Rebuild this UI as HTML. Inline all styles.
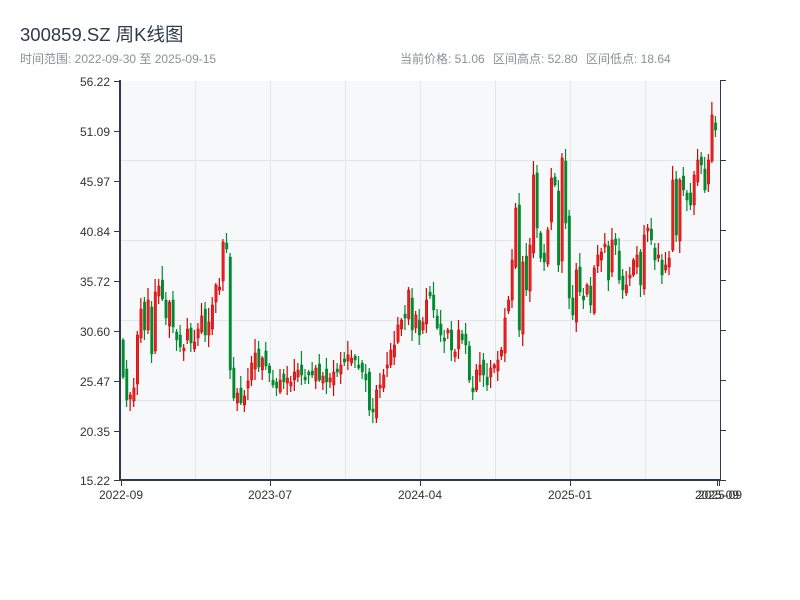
<!DOCTYPE html>
<html><head><meta charset="utf-8"><style>
body{margin:0;width:800px;height:600px;background:#fff;font-family:"Liberation Sans","Noto Sans CJK SC",sans-serif;overflow:hidden}
</style></head><body>
<svg id="s" width="800" height="600" xmlns="http://www.w3.org/2000/svg" style="position:absolute;left:0;top:0">
<text x="20" y="41" font-size="18.5" fill="#2d3a4b" font-family="Liberation Sans,Noto Sans CJK SC,sans-serif">300859.SZ 周K线图</text>
<text x="20" y="63" font-size="12" fill="#8a8f96" font-family="Liberation Sans,Noto Sans CJK SC,sans-serif">时间范围: 2022-09-30 至 2025-09-15</text>
<text x="400" y="63" font-size="12" fill="#8a8f96" font-family="Liberation Sans,Noto Sans CJK SC,sans-serif">当前价格: 51.06</text>
<text x="493" y="63" font-size="12" fill="#8a8f96" font-family="Liberation Sans,Noto Sans CJK SC,sans-serif">区间高点: 52.80</text>
<text x="586" y="63" font-size="12" fill="#8a8f96" font-family="Liberation Sans,Noto Sans CJK SC,sans-serif">区间低点: 18.64</text>
<rect x="121" y="81" width="599" height="399" fill="#f6f8fa"/>
<g stroke="#e2e5ea" stroke-width="1">
<line x1="195.5" y1="81" x2="195.5" y2="480"/><line x1="270.5" y1="81" x2="270.5" y2="480"/><line x1="345.5" y1="81" x2="345.5" y2="480"/><line x1="420.5" y1="81" x2="420.5" y2="480"/><line x1="495.5" y1="81" x2="495.5" y2="480"/><line x1="570.5" y1="81" x2="570.5" y2="480"/><line x1="645.5" y1="81" x2="645.5" y2="480"/>
<line x1="121" y1="160.5" x2="720" y2="160.5"/><line x1="121" y1="240.5" x2="720" y2="240.5"/><line x1="121" y1="320.5" x2="720" y2="320.5"/><line x1="121" y1="400.5" x2="720" y2="400.5"/>
</g>
<g id="c"></g>
<g stroke="#2d3a4b">
<line x1="120" y1="80" x2="120" y2="481" stroke-width="2"/>
<line x1="119" y1="480" x2="721" y2="480" stroke-width="2"/>
<line x1="720.5" y1="80" x2="720.5" y2="481" stroke-width="1"/>
<line x1="114" y1="81.5" x2="120" y2="81.5"/><line x1="114" y1="131.5" x2="120" y2="131.5"/><line x1="114" y1="181.5" x2="120" y2="181.5"/><line x1="114" y1="231.5" x2="120" y2="231.5"/><line x1="114" y1="281.5" x2="120" y2="281.5"/><line x1="114" y1="331.5" x2="120" y2="331.5"/><line x1="114" y1="381.5" x2="120" y2="381.5"/><line x1="114" y1="431.5" x2="120" y2="431.5"/><line x1="114" y1="480.5" x2="120" y2="480.5"/>
<line x1="720" y1="80.5" x2="726" y2="80.5"/><line x1="720" y1="160.5" x2="726" y2="160.5"/><line x1="720" y1="230.5" x2="726" y2="230.5"/><line x1="720" y1="280.5" x2="726" y2="280.5"/><line x1="720" y1="330.5" x2="726" y2="330.5"/><line x1="720" y1="380.5" x2="726" y2="380.5"/><line x1="720" y1="430.5" x2="726" y2="430.5"/><line x1="720" y1="480.5" x2="726" y2="480.5"/>
<line x1="121.5" y1="480" x2="121.5" y2="486"/><line x1="270.5" y1="480" x2="270.5" y2="486"/><line x1="420.5" y1="480" x2="420.5" y2="486"/><line x1="570.5" y1="480" x2="570.5" y2="486"/><line x1="717.5" y1="480" x2="717.5" y2="486"/><line x1="719.5" y1="480" x2="719.5" y2="486"/>
</g>
<g font-size="12" fill="#333" text-anchor="end" font-family="Liberation Sans,sans-serif">
<text x="110" y="86">56.22</text><text x="110" y="136">51.09</text><text x="110" y="186">45.97</text><text x="110" y="236">40.84</text><text x="110" y="286">35.72</text><text x="110" y="336">30.60</text><text x="110" y="386">25.47</text><text x="110" y="436">20.35</text><text x="110" y="485">15.22</text>
</g>
<g font-size="12" fill="#333" text-anchor="middle" font-family="Liberation Sans,sans-serif">
<text x="121" y="499">2022-09</text><text x="270" y="499">2023-07</text><text x="420" y="499">2024-04</text><text x="570" y="499">2025-01</text><text x="717" y="499">2025-09</text><text x="720" y="499">2025-09</text>
</g>
</svg>
<script>
var C=[377,400,395,388,335,309,330,300,354,292,286,299,318,302,327,340,347,348,329,343,342,329,316,335,322,305,285,287,242,249,370,398,393,403,396,381,363,353,367,358,366,373,385,388,380,382,378,382,372,370,375,380,372,375,368,380,376,382,378,372,370,365,360,355,358,360,368,372,380,410,412,390,385,375,365,350,345,325,320,318,290,330,315,335,322,300,296,310,328,335,338,330,350,352,330,340,345,380,392,370,365,375,385,368,365,360,350,318,300,260,208,330,262,290,245,175,228,258,262,230,178,185,265,158,223,298,315,270,292,300,285,305,268,255,252,244,280,240,245,280,290,285,275,260,255,285,235,228,240,260,255,275,265,258,180,235,180,190,200,205,175,160,165,190,160,115,130];
var n=C.length,st=596/n,h='',o=340;
for(var i=0;i<n;i++){var c=C[i],x=122+i*st,t=Math.min(o,c),b=Math.max(o,c);if(b-t<3)b=t+3;
var hi=t-((i*7)%13)-2,lo=b+((i*5)%11)+2,up=c<o,col=up?'#d40000':'#00892e';
h+='<line x1="'+(x+1)+'" y1="'+hi+'" x2="'+(x+1)+'" y2="'+lo+'" stroke="'+col+'" stroke-width="1.2"/>';
h+='<rect x="'+x+'" y="'+t+'" width="2.4" height="'+(b-t)+'" fill="'+(up?'#e52222':col)+'" stroke="'+col+'" stroke-width="0.5"/>';o=c+((i*7)%17)-8;}
document.getElementById('c').innerHTML=h;
</script>
</body></html>
